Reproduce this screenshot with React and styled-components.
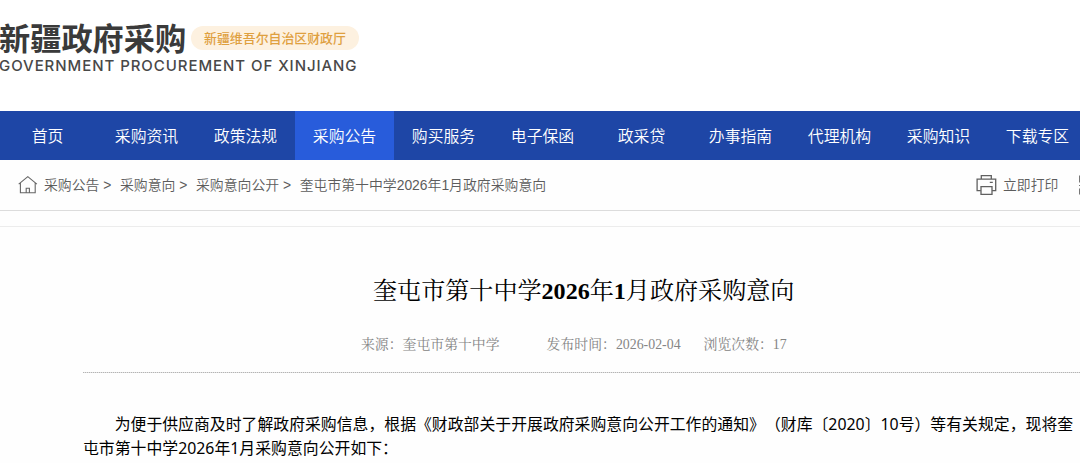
import React from "react";
import styled, {createGlobalStyle} from "styled-components";

const GlobalStyle = createGlobalStyle`
  * {
    box-sizing: border-box;
  }
  body {
    margin: 0;
    background: #fff;
    overflow: hidden;
    font-family: "Liberation Sans", "Noto Sans CJK SC", sans-serif;
    text-spacing-trim: space-all;
  }
`
const Page = styled.div`
  width: 1080px;
  height: 463px;
  overflow: hidden;
  background: #fefefe;
`
const Header = styled.header`
  height: 111px;
  padding-top: 20px;
  background: #fff;
`
const Brand = styled.div`
  display: flex;
  align-items: center;
  height: 36px;
`
const SiteName = styled.h1`
  width: 192px;
  margin: 0 0 0 -1px;
  color: #3a3a3a;
  font-family: "Noto Sans CJK SC", sans-serif;
  font-size: 31.2px;
  font-weight: 700;
  line-height: 32px;
  padding-bottom: 2px;
  white-space: nowrap;
`
const Department = styled.span`
  width: 168px;
  height: 24px;
  border-radius: 12px;
  background: #fdf1e0;
  color: #dfa03f;
  font-family: "Noto Sans CJK SC", sans-serif;
  font-size: 12.9px;
  font-weight: 500;
  line-height: 23px;
  text-align: center;
  white-space: nowrap;
`
const EnglishName = styled.div`
  margin-left: -1px;
  color: #484848;
  font-family: Inter, sans-serif;
  font-size: 15px;
  font-weight: 500;
  letter-spacing: 0.94px;
  line-height: 19px;
  white-space: nowrap;
`
const Nav = styled.nav`
  display: flex;
  height: 49px;
  margin-left: -2px;
  background: #1e46a6;
`
const NavItem = styled.a`
  flex: 0 0 99px;
  background: ${(props) => (props.$active ? "#285cdb" : "transparent")};
  color: #fff;
  font-family: "Noto Sans CJK SC", sans-serif;
  font-size: 15.86px;
  font-weight: 350;
  line-height: 49px;
  text-align: center;
`
const Toolbar = styled.div`
  display: flex;
  align-items: center;
  justify-content: space-between;
  height: 51px;
  padding-left: 18px;
  border-bottom: 1px solid #dcdcdc;
  color: #5c5c5c;
  font-size: 13.87px;
  font-weight: 350;
  white-space: nowrap;

  svg {
    flex: none;
  }
`
const Crumbs = styled.div`
  display: flex;
  align-items: center;
`
const Crumb = styled.span`
  margin-right: 8.6px;
  padding-bottom: 2px;
  &:first-of-type {
    margin-left: 6px;
  }
`
const Actions = styled.div`
  display: flex;
  align-items: center;
  width: 104px;
`
const ActionLabel = styled.span`
  width: 76px;
  margin-left: 6px;
  padding-bottom: 2px;
  flex: none;
`
const Article = styled.main`
  margin-top: 15px;
  padding: 46px 0 0 83px;
  border-top: 1px solid #ececec;
`
const Title = styled.h2`
  margin: 0;
  padding-left: 290px;
  color: #000;
  font-family: "Liberation Serif", "Noto Serif CJK SC", "Noto Sans CJK SC", serif;
  font-size: 24.08px;
  font-weight: 400;
  line-height: 36px;
  white-space: nowrap;
`
const Meta = styled.div`
  display: flex;
  height: 37px;
  margin-top: 26px;
  padding-left: 278px;
  color: #858585;
  font-family: "Liberation Serif", "Noto Serif CJK SC", "Noto Sans CJK SC", serif;
  font-size: 13.87px;
  font-weight: 400;
  line-height: 20px;
  white-space: nowrap;
`
const MetaItem = styled.span`
  margin-right: ${(props) => props.$gap}px;
`
const Rule = styled.div`
  width: 997px;
  height: 1px;
  background: repeating-linear-gradient(90deg, #b4b4b4 0 1px, #e2e2e2 1px 2px);
`
const Paragraph = styled.p`
  margin: 39px 0 0;
  color: #000;
  font-family: "Noto Sans", "Noto Sans CJK SC", sans-serif;
  font-size: 15.86px;
  font-weight: 400;
  line-height: 24px;
  text-indent: 31.7px;
  white-space: nowrap;
`

const navItems = ["首页", "采购资讯", "政策法规", "采购公告", "购买服务", "电子保函", "政采贷", "办事指南", "代理机构", "采购知识", "下载专区"]
const crumbs = ["采购公告 >", "采购意向 >", "采购意向公开 >", "奎屯市第十中学2026年1月政府采购意向"]

function HomeIcon() {
    return (
        <svg width="20" height="20" viewBox="0 0 20 20" fill="none" stroke="#666" strokeWidth="1.1">
            <path d="M.7 9.2 9.8 1.6l9.1 7.6M2.4 8v9.7h14.8V8M8.2 17.7v-4.5h3.2v4.5"/>
        </svg>
    )
}

function PrinterIcon() {
    return (
        <svg width="21" height="22" viewBox="0 0 21 22" fill="none" stroke="#606060" strokeWidth="1.3">
            <path d="M5.3 5V1.7h10V5M4.8 16.7H1.1V5.2h18.6v11.5h-3.6M13.8 8.3h3"/>
            <path d="M5 12.6h11v7.8H5z"/>
        </svg>
    )
}

function QrIcon() {
    return (
        <svg width="20" height="22" viewBox="0 0 20 22" fill="none" stroke="#777" strokeWidth="1.2">
            <path d="M.6 2h7v6h-7zM.6 15h7v5h-7zM12 2h7v6h-7zM0 11.5h5M8 11.5h4M12 15h7v5"/>
        </svg>
    )
}

function App() {
    return (
        <Page lang="zh-CN">
            <GlobalStyle/>
            <Header>
                <Brand>
                    <SiteName>新疆政府采购</SiteName>
                    <Department>新疆维吾尔自治区财政厅</Department>
                </Brand>
                <EnglishName>GOVERNMENT PROCUREMENT OF XINJIANG</EnglishName>
            </Header>
            <Nav>
                {navItems.map((item) => (
                    <NavItem key={item} $active={item === "采购公告"}>{item}</NavItem>
                ))}
            </Nav>
            <Toolbar>
                <Crumbs>
                    <HomeIcon/>
                    {crumbs.map((crumb) => (
                        <Crumb key={crumb}>{crumb}</Crumb>
                    ))}
                </Crumbs>
                <Actions>
                    <PrinterIcon/>
                    <ActionLabel>立即打印</ActionLabel>
                    <QrIcon/>
                </Actions>
            </Toolbar>
            <Article>
                <Title>奎屯市第十中学<b>2026</b>年<b>1</b>月政府采购意向</Title>
                <Meta>
                    <MetaItem $gap={47}>来源：奎屯市第十中学</MetaItem>
                    <MetaItem $gap={23}>发布时间：2026-02-04</MetaItem>
                    <MetaItem $gap={0}>浏览次数：17</MetaItem>
                </Meta>
                <Rule/>
                <Paragraph>
                    为便于供应商及时了解政府采购信息，根据《财政部关于开展政府采购意向公开工作的通知》（财库〔2020〕10号）等有关规定，现将奎
                    <br/>
                    屯市第十中学2026年1月采购意向公开如下：
                </Paragraph>
            </Article>
        </Page>
    );
}

export default App;
